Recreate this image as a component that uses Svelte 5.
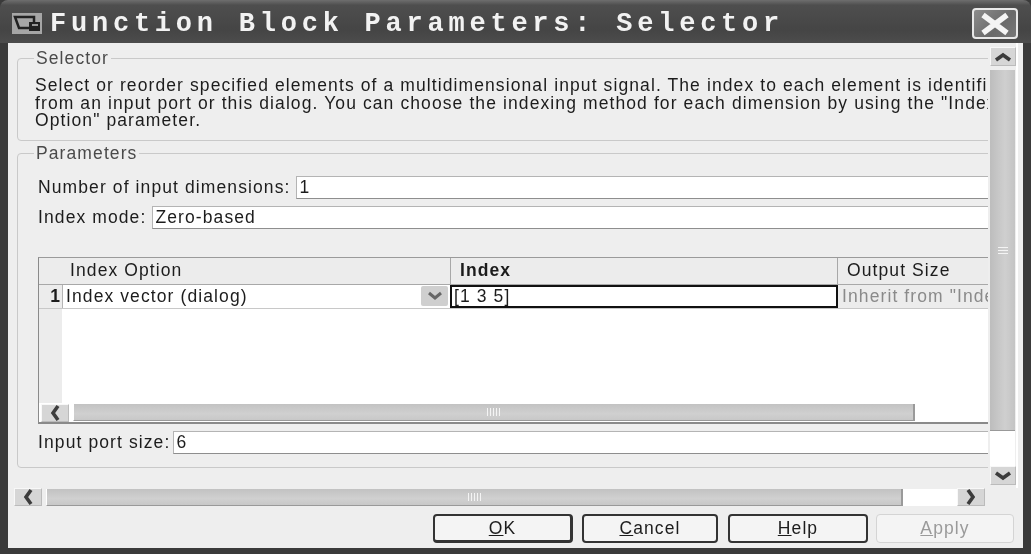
<script>
  // chevron directions for the scroll buttons
  const rot = { up: 0, right: 90, down: 180, left: 270 };
</script>

{#snippet arrow(dir)}
  <span class="sbtn">
    <svg width="18" height="12" viewBox="0 0 18 12" style="transform: rotate({rot[dir]}deg)">
      <path d="M2 9 L9 4 L16 9" fill="none" stroke="#3c3c3c" stroke-width="3.6" />
    </svg>
  </span>
{/snippet}

{#snippet grip()}
  <span class="grip"><i></i><i></i><i></i><i></i><i></i></span>
{/snippet}

<div class="window">
  <header class="titlebar">
    <svg class="appicon" width="30" height="21" viewBox="0 0 30 21">
      <rect width="30" height="21" fill="#a6a6a6" />
      <path d="M3 4 H22 V15 H7 Z" fill="none" stroke="#222" stroke-width="2.5" />
      <rect x="17" y="9" width="11" height="9" fill="#222" />
      <rect x="20" y="11" width="6" height="2" fill="#999" />
    </svg>
    <h1>Function Block Parameters: Selector</h1>
    <button class="close" aria-label="Close">
      <svg width="32" height="24" viewBox="0 0 32 24">
        <path d="M4 3 L28 21 M28 3 L4 21" stroke="#f4f4f4" stroke-width="5.5" />
      </svg>
    </button>
  </header>

  <div class="client">
    <div class="upper">
      <div class="pane">
        <div class="panel">
          <fieldset class="group selector">
            <legend>Selector</legend>
            <p>
              <span>Select or reorder specified elements of a multidimensional input signal. The index to each element is identified</span>
              <span>from an input port or this dialog. You can choose the indexing method for each dimension by using the "Index</span>
              <span>Option" parameter.</span>
            </p>
          </fieldset>

          <fieldset class="group params">
            <legend>Parameters</legend>
            <div class="params-body">
              <div class="field first">
                <label for="dims">Number of input dimensions:</label>
                <input id="dims" value="1" />
              </div>
              <div class="field">
                <label for="mode">Index mode:</label>
                <input id="mode" value="Zero-based" />
              </div>

              <div class="table">
                <div class="thead">
                  <div class="corner"></div>
                  <div class="th c1">Index Option</div>
                  <div class="th c2"><b>Index</b></div>
                  <div class="th c3">Output Size</div>
                </div>
                <div class="trow">
                  <div class="rownum">1</div>
                  <div class="td c1 combo">
                    <span>Index vector (dialog)</span>
                    <span class="drop">
                      <svg width="18" height="10" viewBox="0 0 18 10">
                        <path d="M3 2 L9 7 L15 2" fill="none" stroke="#666" stroke-width="3" />
                      </svg>
                    </span>
                  </div>
                  <div class="td c2 active">[1 3 5]</div>
                  <div class="td c3 inherit">Inherit from "Index"</div>
                </div>
                <div class="tbody">
                  <div class="gutter"></div>
                </div>
                <div class="hscroll inner">
                  {@render arrow('left')}
                  <span class="hthumb inner-thumb">{@render grip()}</span>
                </div>
              </div>

              <div class="field last">
                <label for="port">Input port size:</label>
                <input id="port" value="6" />
              </div>
            </div>
          </fieldset>
        </div>
      </div>

      <div class="vscroll">
        {@render arrow('up')}
        <div class="vthumb"><span class="vgrip"><i></i><i></i><i></i></span></div>
        <div class="vrest"></div>
        {@render arrow('down')}
      </div>
    </div>

    <div class="hscroll outer">
      {@render arrow('left')}
      <span class="hthumb outer-thumb">{@render grip()}</span>
      <span class="hrest"></span>
      {@render arrow('right')}
    </div>

    <div class="actions">
      <button class="btn ok"><u>O</u>K</button>
      <button class="btn cancel"><u>C</u>ancel</button>
      <button class="btn help"><u>H</u>elp</button>
      <button class="btn apply" disabled><u>A</u>pply</button>
    </div>
  </div>
</div>

<style>
  :global(body) {
    margin: 0;
    background: #333;
  }

  .window {
    width: 1031px;
    height: 554px;
    display: flex;
    flex-direction: column;
    background: #3a3a3a;
    overflow: hidden;
    font-family: "Liberation Sans", Arial, sans-serif;
    font-size: 17.5px;
    letter-spacing: 1.1px;
    color: #1c1c1c;
    filter: blur(0.5px);
  }

  /* title bar */
  .titlebar {
    height: 43px;
    flex: none;
    box-sizing: border-box;
    display: flex;
    align-items: center;
    padding: 4px 13px 0 12px;
    background: linear-gradient(#6e6e6e 0, #4e4e4e 12%, #454545 70%, #4c4c4c 100%);
    border-radius: 8px 8px 0 0;
  }

  .appicon {
    flex: none;
  }

  h1 {
    margin: 0 0 0 8px;
    flex: 1;
    font-family: "Liberation Mono", monospace;
    font-weight: 700;
    font-size: 27px;
    letter-spacing: 4.77px;
    color: #f2f2f2;
    white-space: nowrap;
  }

  .close {
    width: 46px;
    height: 31px;
    padding: 0;
    display: flex;
    align-items: center;
    justify-content: center;
    background: linear-gradient(135deg, #8c8c8c, #6a6a6a 60%, #777);
    border: 2px solid #e8e8e8;
    border-radius: 4px;
  }

  /* client area */
  .client {
    flex: 1;
    min-height: 0;
    margin: 0 8px 6px;
    display: flex;
    flex-direction: column;
    background: #eeeeee;
  }

  .upper {
    display: flex;
    height: 445px;
    flex: none;
  }

  .pane {
    width: 980px;
    flex: none;
    overflow: hidden;
  }

  .panel {
    width: 1200px;
    padding: 5px 0 0 9px;
  }

  .group {
    margin: 0;
    padding: 0;
    border: 1px solid #c9c9c9;
    border-radius: 4px;
    box-sizing: border-box;
  }

  legend {
    margin-left: 16px;
    padding: 0 2px;
    line-height: 20px;
    color: #4a4a4a;
    font-size: 17.5px;
  }

  .selector {
    height: 93px;
  }

  .selector p {
    margin: 9px 0 0 17px;
    line-height: 17.5px;
    white-space: nowrap;
  }

  .selector p span {
    display: block;
  }

  .params {
    height: 325px;
    margin-top: 2px;
  }

  .params-body {
    padding-left: 20px;
  }

  .field {
    display: flex;
    align-items: center;
    gap: 6px;
    height: 23px;
    margin-top: 7px;
    white-space: nowrap;
  }

  .field.first {
    margin-top: 13px;
  }

  .field.last {
    margin-top: 7px;
    gap: 3px;
  }

  .field input {
    flex: 1;
    min-width: 0;
    height: 23px;
    box-sizing: border-box;
    padding: 0 2px;
    border: 1px solid #b4b4b4;
    border-bottom-color: #8e8e8e;
    background: #fff;
    font: inherit;
    letter-spacing: inherit;
    color: #1c1c1c;
    outline: none;
  }

  /* parameter table */
  .table {
    margin-top: 28px;
    height: 167px;
    box-sizing: border-box;
    border: 1px solid #8a8a8a;
    border-top-color: #9a9a9a;
    border-bottom: 2px solid #8a8a8a;
    border-right: none;
    background: #fff;
    display: flex;
    flex-direction: column;
    overflow: hidden;
  }

  .thead,
  .trow {
    display: flex;
    flex: none;
  }

  .thead {
    height: 27px;
    background: #ececec;
    border-bottom: 1px solid #a8a8a8;
    box-sizing: border-box;
  }

  .corner,
  .rownum,
  .gutter {
    width: 23px;
    flex: none;
    background: #ececec;
  }

  .c1,
  .c2 {
    width: 388px;
    flex: none;
    box-sizing: border-box;
  }

  .c3 {
    width: 350px;
    flex: none;
    box-sizing: border-box;
  }

  .th {
    line-height: 24px;
    padding-left: 8px;
    border-right: 1px solid #a8a8a8;
    white-space: nowrap;
  }

  .th.c1 {
    border-right: none;
  }

  .th.c2 {
    border-left: 1px solid #a8a8a8;
    padding-left: 9px;
  }

  .th.c3 {
    padding-left: 9px;
    border: none;
  }

  .trow {
    height: 23px;
    border-bottom: 1px solid #c8c8c8;
  }

  .rownum {
    font-weight: 700;
    text-align: right;
    line-height: 22px;
    padding-right: 1px;
    box-sizing: border-box;
  }

  .td {
    line-height: 22px;
  }

  .combo {
    display: flex;
    justify-content: space-between;
    padding-left: 3px;
    background: #fff;
    border-left: 1px solid #b4b4b4;
    white-space: nowrap;
  }

  .drop {
    width: 27px;
    height: 20px;
    margin-top: 1px;
    margin-right: 2px;
    background: #cfcfcf;
    border-radius: 2px;
    display: flex;
    align-items: center;
    justify-content: center;
  }

  .active {
    border: 2px solid #111;
    height: 23px;
    line-height: 19px;
    padding-left: 2px;
    white-space: nowrap;
  }

  .inherit {
    background: #ececec;
    color: #8a8a8a;
    padding-left: 4px;
    white-space: nowrap;
  }

  .tbody {
    flex: 1;
    min-height: 0;
    display: flex;
  }

  /* scroll bars */
  .hscroll {
    display: flex;
    align-items: center;
    flex: none;
  }

  .sbtn {
    width: 28px;
    height: 18px;
    flex: none;
    display: flex;
    align-items: center;
    justify-content: center;
    background: #d6d6d6;
    border: 1px solid #f8f8f8;
    border-bottom-color: #bbb;
    border-right-color: #bbb;
    box-sizing: border-box;
  }

  .hthumb {
    height: 17px;
    display: flex;
    align-items: center;
    justify-content: center;
    background: linear-gradient(#c2c2c2, #d0d0d0 60%, #c8c8c8);
    border-left: 1px solid #fff;
    border-right: 2px solid #9a9a9a;
    border-bottom: 1px solid #999;
    box-sizing: border-box;
  }

  .inner {
    height: 19px;
    padding-left: 2px;
    background: #fff;
  }

  .inner-thumb {
    width: 842px;
    margin-left: 4px;
  }

  .outer {
    height: 18px;
    margin-left: 6px;
    width: 971px;
  }

  .outer-thumb {
    width: 857px;
    margin-left: 4px;
  }

  .hrest {
    width: 54px;
    height: 17px;
    background: #fff;
  }

  .grip {
    display: flex;
    gap: 2px;
  }

  .grip i {
    width: 1px;
    height: 8px;
    background: #f4f4f4;
  }

  .vscroll {
    width: 28px;
    flex: none;
    margin-left: 2px;
    padding-top: 4px;
    display: flex;
    flex-direction: column;
    box-sizing: border-box;
    border-right: 2px solid #fff;
  }

  .vscroll .sbtn {
    height: 19px;
    width: 26px;
  }

  .vthumb {
    height: 361px;
    margin-top: 4px;
    width: 25px;
    background: linear-gradient(90deg, #bdbdbd, #cfcfcf 60%, #c4c4c4);
    border-bottom: 1px solid #999;
    display: flex;
    align-items: center;
    justify-content: center;
    box-sizing: border-box;
  }

  .vgrip {
    display: flex;
    flex-direction: column;
    gap: 2px;
  }

  .vgrip i {
    width: 10px;
    height: 1px;
    background: #f4f4f4;
  }

  .vrest {
    height: 35px;
    width: 25px;
    background: #fff;
  }

  /* dialog buttons */
  .actions {
    display: flex;
    margin-top: 8px;
    padding-left: 425px;
  }

  .btn {
    height: 29px;
    padding: 0;
    background: #f4f4f4;
    border: 2px solid #333;
    border-radius: 4px;
    font: inherit;
    letter-spacing: inherit;
    color: #1c1c1c;
  }

  .ok {
    width: 140px;
    border-bottom-width: 3px;
    border-right-width: 3px;
  }

  .cancel {
    width: 136px;
    margin-left: 9px;
  }

  .help {
    width: 140px;
    margin-left: 10px;
  }

  .apply {
    width: 138px;
    margin-left: 8px;
    border: 1px solid #d4d4d4;
    color: #9a9a9a;
  }
</style>
